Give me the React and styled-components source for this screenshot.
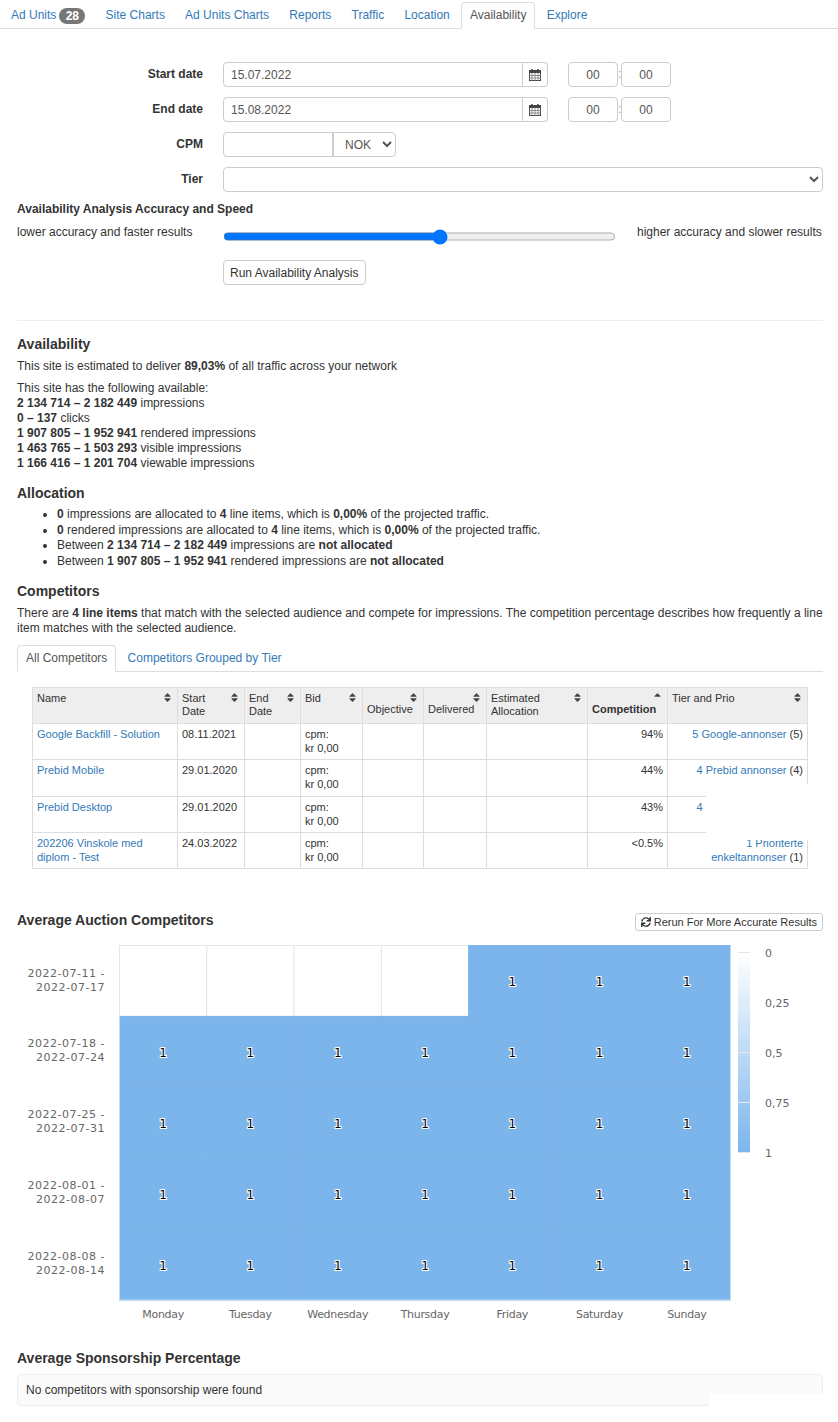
import React from 'react'
import styled, { createGlobalStyle } from 'styled-components'
import { FaSort, FaSortUp, FaSync } from 'react-icons/fa'

const GlobalStyle = createGlobalStyle`
    body {
        margin: 0;
        background: #fff;
        color: #333;
        font-family: "Liberation Sans", Arial, sans-serif;
        font-size: 12px;
        line-height: 15px;
    }
`
const Tabs = styled.div`
    display: flex;
    height: ${props => props.$height}px;
    margin-top: ${props => props.$gap || 0}px;
    padding-left: ${props => props.$left}px;
    border-bottom: 1px solid #ddd;
`
const Tab = styled.a`
    display: flex;
    align-items: center;
    gap: 3px;
    margin-top: ${props => props.$top}px;
    margin-right: 2.2px;
    margin-bottom: -1px;
    padding: 0 8px;
    border: 1px solid ${props => props.$active ? '#ddd' : 'transparent'};
    border-bottom-color: ${props => props.$active ? '#fff' : 'transparent'};
    border-radius: 4px 4px 0 0;
    background: ${props => props.$active ? '#fff' : 'transparent'};
    color: ${props => props.$active ? '#555' : '#337ab7'};
`
const Badge = styled.span`
    width: 26px;
    height: 16px;
    border-radius: 8px;
    background: #777;
    color: #fff;
    font-weight: bold;
    line-height: 16px;
    text-align: center;
`
const Page = styled.main`
    padding: 33px 15px 0 17px;
`
const FormRow = styled.div`
    display: flex;
    align-items: center;
    height: 25px;
    margin-bottom: 10px;
`
const Label = styled.label`
    width: 186px;
    margin-right: 20px;
    margin-top: -1px;
    font-weight: bold;
    text-align: right;
`
const DateGroup = styled.div`
    display: flex;
    width: 325px;
    margin-right: 20px;
`
const Input = styled.input`
    box-sizing: border-box;
    flex: ${props => props.$width ? 'none' : 1};
    min-width: 0;
    width: ${props => props.$width ? `${props.$width}px` : 'auto'};
    height: 25px;
    padding: 0 7px;
    border: 1px solid #ccc;
    border-radius: ${props => props.$radius || '4px'};
    color: #555;
    font: 12px "Liberation Sans", Arial, sans-serif;
    text-align: ${props => props.$center ? 'center' : 'left'};
`
const Addon = styled.span`
    box-sizing: border-box;
    display: flex;
    align-items: center;
    justify-content: center;
    width: 25px;
    height: 25px;
    border: 1px solid #ccc;
    border-left: 0;
    border-radius: 0 4px 4px 0;
`
const Colon = styled.span`
    width: 3px;
    color: #999;
    text-align: center;
`
const Select = styled.select`
    box-sizing: border-box;
    width: ${props => props.$width};
    height: 25px;
    padding: 0 7px;
    border: 1px solid #ccc;
    border-radius: ${props => props.$joined ? '0 4px 4px 0' : '4px'};
    background: #fff;
    color: #555;
    font: 12px "Liberation Sans", Arial, sans-serif;
`
const SubHeading = styled.div`
    margin-top: 3px;
    font-weight: bold;
`
const SliderRow = styled.div`
    display: flex;
    align-items: flex-start;
    height: 35px;
    margin-top: 8px;
`
const SliderLabel = styled.span`
    width: ${props => props.$width}px;
    flex: none;
`
const Range = styled.input`
    box-sizing: border-box;
    flex: none;
    width: 393px;
    height: 21px;
    margin: 1px 21px 0 0;
    border: 1px solid #f5f5f5;
    border-radius: 4px;
    accent-color: #0075ff;
`
const Button = styled.button`
    box-sizing: border-box;
    height: 25px;
    margin-left: 206px;
    padding: 0 6px;
    border: 1px solid #ccc;
    border-radius: 4px;
    background: #fff;
    color: #333;
    font: 12px "Liberation Sans", Arial, sans-serif;
`
const Rule = styled.hr`
    height: 1px;
    margin: 35px 0 15px;
    border: 0;
    background: #eee;
`
const Heading = styled.h3`
    margin: ${props => props.$top || 0}px 0 ${props => props.$bottom || 7}px;
    color: #333;
    font-size: 14px;
    font-weight: bold;
    line-height: 16px;
`
const Text = styled.p`
    margin: 0 0 7px;
`
const List = styled.ul`
    margin: 0;
    padding-left: 40px;
    line-height: 15.5px;
`
const TableWrap = styled.div`
    position: relative;
    margin: 15px 15px 0 15px;
`
const Table = styled.table`
    width: 775px;
    table-layout: fixed;
    border-collapse: collapse;
    font-size: 11px;
`
const Th = styled.th`
    box-sizing: border-box;
    height: 36px;
    padding: 4px;
    border: 1px solid #ddd;
    background: #eee;
    font-weight: ${props => props.$bold ? 'bold' : 'normal'};
    line-height: 13px;
    text-align: left;
    vertical-align: top;
`
const SortIcon = styled.span`
    float: right;
    height: 11px;
    color: #444;
    font-size: 11px;
    line-height: 11px;
`
const Tr = styled.tr`
    height: ${props => props.$height}px;
`
const Td = styled.td`
    box-sizing: border-box;
    padding: 3px 4px;
    border: 1px solid #ddd;
    line-height: 14px;
    text-align: ${props => props.$right ? 'right' : 'left'};
    vertical-align: top;
`
const Link = styled.a`
    color: #337ab7;
`
// white patches that lie over the content in the capture
const TablePatch = styled.div`
    position: absolute;
    top: 97px;
    left: 674px;
    width: 112px;
    height: 56px;
    background: #fff;
`
const ChartHead = styled.div`
    display: flex;
    align-items: flex-start;
    justify-content: space-between;
    margin-top: 43px;
`
const RerunButton = styled.button`
    display: flex;
    align-items: center;
    gap: 3px;
    box-sizing: border-box;
    height: 18px;
    margin-top: 1px;
    padding: 0 5px;
    border: 1px solid #ccc;
    border-radius: 3px;
    background: #fff;
    color: #333;
    font: 11px "Liberation Sans", Arial, sans-serif;
`
const Chart = styled.svg`
    display: block;
    margin: 0 -15px 0 -17px;
    font-family: "DejaVu Sans", Verdana, sans-serif;
    font-size: 11px;
`
const WeekLabel = styled.text`
    fill: #666;
    letter-spacing: 0.5px;
`
const DayLabel = styled.text`
    fill: #666;
    letter-spacing: -0.3px;
`
const CellValue = styled.text`
    fill: #000;
    stroke: #fff;
    stroke-width: 2px;
    paint-order: stroke;
    font-size: 12px;
`
const NoticeWrap = styled.div`
    position: relative;
`
const Notice = styled.div`
    box-sizing: border-box;
    height: 32px;
    padding: 8px 8px;
    border: 1px solid #eee;
    border-radius: 4px;
    background: #fafafa;
`
const NoticePatch = styled.div`
    position: absolute;
    top: 20px;
    right: -2px;
    width: 116px;
    height: 16px;
    background: #fff;
`

const tabs = ['Site Charts', 'Ad Units Charts', 'Reports', 'Traffic', 'Location']

const columns = [
    { title: 'Name', width: 145 },
    { title: 'Start Date', width: 67 },
    { title: 'End Date', width: 56 },
    { title: 'Bid', width: 62 },
    { title: 'Objective', width: 61 },
    { title: 'Delivered', width: 63 },
    { title: 'Estimated Allocation', width: 101 },
    { title: 'Competition', width: 80, bold: true, sorted: true },
    { title: 'Tier and Prio', width: 140 },
]

const rows = [
    { name: 'Google Backfill - Solution', start: '08.11.2021', share: '94%', tier: '5 Google-annonser', prio: '(5)', height: 36 },
    { name: 'Prebid Mobile', start: '29.01.2020', share: '44%', tier: '4 Prebid annonser', prio: '(4)', height: 37 },
    { name: 'Prebid Desktop', start: '29.01.2020', share: '43%', tier: '4 Prebid annonser', prio: '(4)', height: 36 },
    { name: '202206 Vinskole med diplom - Test', start: '24.03.2022', share: '<0.5%', tier: '1 Prioriterte enkeltannonser', prio: '(1)', height: 36 },
]

const weeks = [
    ['2022-07-11 -', '2022-07-17'],
    ['2022-07-18 -', '2022-07-24'],
    ['2022-07-25 -', '2022-07-31'],
    ['2022-08-01 -', '2022-08-07'],
    ['2022-08-08 -', '2022-08-14'],
]
const days = ['Monday', 'Tuesday', 'Wednesday', 'Thursday', 'Friday', 'Saturday', 'Sunday']
const legend = [['0', 0], ['0,25', 1], ['0,5', 2], ['0,75', 3], ['1', 4]]

const cellW = 611 / 7
const cellH = 354.5 / 5
const chartX = 119.5
const chartY = 10.5

function CalendarIcon() {
    return (
        <svg width="12" height="12" viewBox="0 0 12 12">
            <rect x="0.5" y="1.5" width="11" height="10" fill="#fff" stroke="#444" />
            <rect x="0" y="1" width="12" height="3" fill="#444" />
            <path d="M3 0v2.5M9 0v2.5" stroke="#444" strokeWidth="1.5" />
            <path d="M0 6.5h12M0 9h12M3 4v8M6 4v8M9 4v8" stroke="#777" strokeWidth="0.8" />
        </svg>
    )
}

function Heatmap() {
    return (
        <Chart width="838" height="394" viewBox="0 0 838 394">
            <defs>
                <linearGradient id="legendFill" x1="0" y1="0" x2="0" y2="1">
                    <stop offset="0" stopColor="#ffffff" />
                    <stop offset="1" stopColor="#7cb5ec" />
                </linearGradient>
            </defs>
            {weeks.map((week, row) => days.map((day, col) => {
                const empty = row === 0 && col < 4
                const x = chartX + col * cellW
                const y = chartY + row * cellH
                return (
                    <g key={day + row}>
                        <rect x={x} y={y} width={cellW} height={cellH} fill={empty ? '#fff' : '#7cb5ec'} stroke={empty ? '#e6e6e6' : '#7cb5ec'} />
                        {!empty && (
                            <CellValue x={x + cellW / 2} y={y + cellH / 2 + 5} textAnchor="middle">1</CellValue>
                        )}
                    </g>
                )
            }))}
            <path d={`M${chartX} ${chartY + cellH}V${chartY + 5 * cellH}H${chartX + 7 * cellW}V${chartY}`} fill="none" stroke="#c5dcf3" />
            <path d={`M${chartX} ${chartY + cellH}V${chartY}H${chartX + 4 * cellW}`} fill="none" stroke="#e6e6e6" />
            {weeks.map((week, row) => (
                <WeekLabel key={week[0]} textAnchor="end">
                    <tspan x="105" y={chartY + row * cellH + 31}>{week[0]}</tspan>
                    <tspan x="105" y={chartY + row * cellH + 45}>{week[1]}</tspan>
                </WeekLabel>
            ))}
            {days.map((day, col) => (
                <DayLabel key={day} x={chartX + col * cellW + cellW / 2} y="383" textAnchor="middle">{day}</DayLabel>
            ))}
            <rect x="738" y="17" width="12" height="201" fill="url(#legendFill)" />
            {legend.map(([label, step]) => (
                <g key={label}>
                    <path d={`M738 ${17.5 + step * 50}H750`} stroke="#e6e6e6" />
                    <text x="765" y={22 + step * 50} fill="#666">{label}</text>
                </g>
            ))}
        </Chart>
    )
}

function DateRow({ label, value }) {
    return (
        <FormRow>
            <Label>{label}</Label>
            <DateGroup>
                <Input defaultValue={value} $radius="4px 0 0 4px" />
                <Addon><CalendarIcon /></Addon>
            </DateGroup>
            <Input defaultValue="00" $width={50} $center />
            <Colon>:</Colon>
            <Input defaultValue="00" $width={50} $center />
        </FormRow>
    )
}

export default function App() {
    return (
        <>
            <GlobalStyle />
            <Tabs $height={28} $left={2}>
                <Tab $top={2}>Ad Units <Badge>28</Badge></Tab>
                {tabs.map(tab => <Tab key={tab} $top={2}>{tab}</Tab>)}
                <Tab $top={2} $active>Availability</Tab>
                <Tab $top={2}>Explore</Tab>
            </Tabs>
            <Page>
                <DateRow label="Start date" value="15.07.2022" />
                <DateRow label="End date" value="15.08.2022" />
                <FormRow>
                    <Label>CPM</Label>
                    <Input $width={110} $radius="4px 0 0 4px" />
                    <Select $width="63px" $joined defaultValue="NOK"><option>NOK</option></Select>
                </FormRow>
                <FormRow>
                    <Label>Tier</Label>
                    <Select $width="600px"><option></option></Select>
                </FormRow>
                <SubHeading>Availability Analysis Accuracy and Speed</SubHeading>
                <SliderRow>
                    <SliderLabel $width={206}>lower accuracy and faster results</SliderLabel>
                    <Range type="range" min="0" max="9" defaultValue="5" />
                    <SliderLabel>higher accuracy and slower results</SliderLabel>
                </SliderRow>
                <Button>Run Availability Analysis</Button>
                <Rule />
                <Heading>Availability</Heading>
                <Text>This site is estimated to deliver <b>89,03%</b> of all traffic across your network</Text>
                <Text>
                    This site has the following available:<br />
                    <b>2 134 714 – 2 182 449</b> impressions<br />
                    <b>0 – 137</b> clicks<br />
                    <b>1 907 805 – 1 952 941</b> rendered impressions<br />
                    <b>1 463 765 – 1 503 293</b> visible impressions<br />
                    <b>1 166 416 – 1 201 704</b> viewable impressions
                </Text>
                <Heading $top={14} $bottom={6}>Allocation</Heading>
                <List>
                    <li><b>0</b> impressions are allocated to <b>4</b> line items, which is <b>0,00%</b> of the projected traffic.</li>
                    <li><b>0</b> rendered impressions are allocated to <b>4</b> line items, which is <b>0,00%</b> of the projected traffic.</li>
                    <li>Between <b>2 134 714 – 2 182 449</b> impressions are <b>not allocated</b></li>
                    <li>Between <b>1 907 805 – 1 952 941</b> rendered impressions are <b>not allocated</b></li>
                </List>
                <Heading $top={14}>Competitors</Heading>
                <Text>There are <b>4 line items</b> that match with the selected audience and compete for impressions. The competition percentage describes how frequently a line item matches with the selected audience.</Text>
                <Tabs $height={26} $left={0} $gap={9}>
                    <Tab $top={0} $active>All Competitors</Tab>
                    <Tab $top={0}>Competitors Grouped by Tier</Tab>
                </Tabs>
                <TableWrap>
                    <Table>
                        <colgroup>
                            {columns.map(col => <col key={col.title} width={col.width} />)}
                        </colgroup>
                        <thead>
                            <tr>
                                {columns.map(col => (
                                    <Th key={col.title} $bold={col.bold}>
                                        <SortIcon>{col.sorted ? <FaSortUp /> : <FaSort />}</SortIcon>
                                        {col.title}
                                    </Th>
                                ))}
                            </tr>
                        </thead>
                        <tbody>
                            {rows.map(row => (
                                <Tr key={row.name} $height={row.height}>
                                    <Td><Link>{row.name}</Link></Td>
                                    <Td>{row.start}</Td>
                                    <Td />
                                    <Td>cpm:<br />kr 0,00</Td>
                                    <Td />
                                    <Td />
                                    <Td />
                                    <Td $right>{row.share}</Td>
                                    <Td $right><Link>{row.tier}</Link> {row.prio}</Td>
                                </Tr>
                            ))}
                        </tbody>
                    </Table>
                    <TablePatch />
                </TableWrap>
                <ChartHead>
                    <Heading>Average Auction Competitors</Heading>
                    <RerunButton><FaSync size={10} /> Rerun For More Accurate Results</RerunButton>
                </ChartHead>
                <Heatmap />
                <Heading $top={21} $bottom={8}>Average Sponsorship Percentage</Heading>
                <NoticeWrap>
                    <Notice>No competitors with sponsorship were found</Notice>
                    <NoticePatch />
                </NoticeWrap>
            </Page>
        </>
    )
}
